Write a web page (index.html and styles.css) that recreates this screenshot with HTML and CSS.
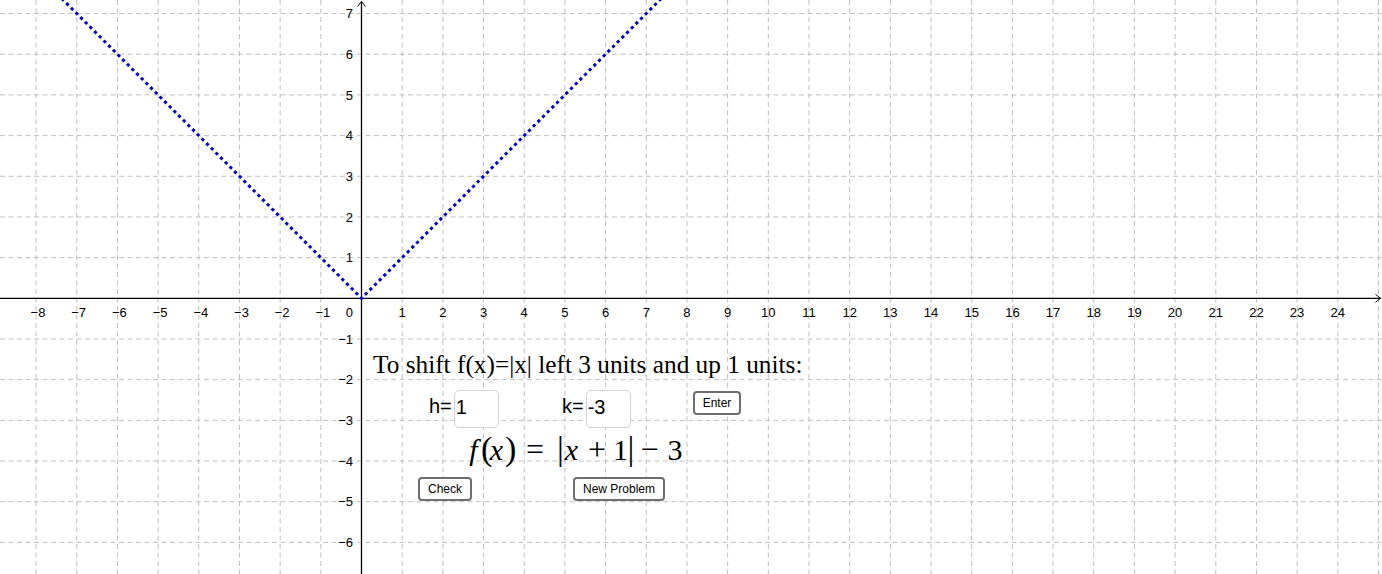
FILE: index.html
```html
<!DOCTYPE html>
<html lang="en">
<head>
<meta charset="utf-8">
<title>Shift f(x)=|x|</title>
<link rel="stylesheet" href="styles.css">
</head>
<body>
<div class="applet">
  <svg class="graph" width="1382" height="574" viewBox="0 0 1382 574" xmlns="http://www.w3.org/2000/svg">
    <path class="grid" d="M-4.62 0V574M36.06 0V574M76.74 0V574M117.42 0V574M158.1 0V574M198.78 0V574M239.46 0V574M280.14 0V574M320.82 0V574M402.18 0V574M442.86 0V574M483.54 0V574M524.22 0V574M564.9 0V574M605.58 0V574M646.26 0V574M686.94 0V574M727.62 0V574M768.3 0V574M808.98 0V574M849.66 0V574M890.34 0V574M931.02 0V574M971.7 0V574M1012.38 0V574M1053.06 0V574M1093.74 0V574M1134.42 0V574M1175.1 0V574M1215.78 0V574M1256.46 0V574M1297.14 0V574M1337.82 0V574M1378.5 0V574"/>
    <path class="grid" d="M0 13.54H1382M0 54.22H1382M0 94.9H1382M0 135.58H1382M0 176.26H1382M0 216.94H1382M0 257.62H1382M0 338.98H1382M0 379.66H1382M0 420.34H1382M0 461.02H1382M0 501.7H1382M0 542.38H1382"/>
    <path class="axis" d="M0 298.3H1380.5M361.5 574V1.5"/>
    <path class="arrow" d="M357.5 6.5L361.5 1.5L365.5 6.5M1375.5 294.3L1380.5 298.3L1375.5 302.3"/>
    <polyline class="curve" points="52.3,-10.9 361.5,298.3 670.7,-10.9"/>
    <g class="xlabels">
      <text x="38" y="317">−8</text>
      <text x="78.7" y="317">−7</text>
      <text x="119.4" y="317">−6</text>
      <text x="160.1" y="317">−5</text>
      <text x="200.8" y="317">−4</text>
      <text x="241.5" y="317">−3</text>
      <text x="282.1" y="317">−2</text>
      <text x="322.8" y="317">−1</text>
      <text x="402.2" y="317">1</text>
      <text x="442.9" y="317">2</text>
      <text x="483.5" y="317">3</text>
      <text x="524.2" y="317">4</text>
      <text x="564.9" y="317">5</text>
      <text x="605.6" y="317">6</text>
      <text x="646.3" y="317">7</text>
      <text x="686.9" y="317">8</text>
      <text x="727.6" y="317">9</text>
      <text x="768.3" y="317">10</text>
      <text x="809" y="317">11</text>
      <text x="849.7" y="317">12</text>
      <text x="890.3" y="317">13</text>
      <text x="931" y="317">14</text>
      <text x="971.7" y="317">15</text>
      <text x="1012.4" y="317">16</text>
      <text x="1053.1" y="317">17</text>
      <text x="1093.7" y="317">18</text>
      <text x="1134.4" y="317">19</text>
      <text x="1175.1" y="317">20</text>
      <text x="1215.8" y="317">21</text>
      <text x="1256.5" y="317">22</text>
      <text x="1297.1" y="317">23</text>
      <text x="1337.8" y="317">24</text>
    </g>
    <g class="ylabels">
      <text x="353" y="317">0</text>
      <text x="353" y="18.2">7</text>
      <text x="353" y="58.9">6</text>
      <text x="353" y="99.6">5</text>
      <text x="353" y="140.3">4</text>
      <text x="353" y="181">3</text>
      <text x="353" y="221.6">2</text>
      <text x="353" y="262.3">1</text>
      <text x="353" y="343.7">−1</text>
      <text x="353" y="384.4">−2</text>
      <text x="353" y="425">−3</text>
      <text x="353" y="465.7">−4</text>
      <text x="353" y="506.4">−5</text>
      <text x="353" y="547.1">−6</text>
    </g>
  </svg>

  <div class="prompt">To shift f(x)=|x| left 3 units and up 1 units:</div>

  <div class="field field-h"><span class="field-label">h=</span><span class="field-box">1</span></div>
  <div class="field field-k"><span class="field-label">k=</span><span class="field-box">-3</span></div>

  <button class="btn btn-enter" type="button">Enter</button>

  <div class="formula">
    <span class="m mi w15">f</span><span class="m fence w7">(</span><span class="m mi w17">x</span><span class="m fence w8">)</span><span class="m op w44">=</span><span class="m fence bar w5">|</span><span class="m mi w19">x</span><span class="m op w32">+</span><span class="m w14">1</span><span class="m fence bar w8">|</span><span class="m op w29">−</span><span class="m w22">3</span>
  </div>

  <button class="btn btn-check" type="button">Check</button>
  <button class="btn btn-new" type="button">New Problem</button>
</div>
</body>
</html>
```

FILE: styles.css
```css
html, body {
  margin: 0;
  padding: 0;
  background: #ffffff;
}

.applet {
  position: relative;
  width: 1382px;
  height: 574px;
  overflow: hidden;
  background: #ffffff;
  font-family: "Liberation Sans", Arial, sans-serif;
}

.graph {
  display: block;
}

.grid {
  fill: none;
  stroke: #c0c0c0;
  stroke-width: 1;
  stroke-dasharray: 5 3.5;
}

.axis {
  fill: none;
  stroke: #000000;
  stroke-width: 1.3;
}

.arrow {
  fill: none;
  stroke: #000000;
  stroke-width: 1;
}

.curve {
  fill: none;
  stroke: #0000cc;
  stroke-width: 3;
  stroke-dasharray: 3.2 3.4;
}

.xlabels text,
.ylabels text {
  font-family: "Liberation Sans", Arial, sans-serif;
  font-size: 13px;
  fill: #000000;
}

.xlabels text {
  text-anchor: middle;
}

.ylabels text {
  text-anchor: end;
}

.prompt {
  position: absolute;
  left: 373px;
  top: 352px;
  font-family: "Liberation Serif", "Times New Roman", serif;
  font-size: 25.3px;
  line-height: 25px;
  white-space: nowrap;
  color: #000000;
}

.field {
  position: absolute;
  top: 390px;
  display: flex;
  align-items: flex-start;
}

.field-h {
  left: 429px;
}

.field-k {
  left: 562px;
}

.field-label {
  font-size: 20px;
  line-height: 33px;
  color: #000000;
  margin-right: 2px;
}

.field-box {
  box-sizing: border-box;
  width: 45px;
  height: 38px;
  border: 1px solid #d4d4d4;
  border-radius: 5px;
  padding-left: 1px;
  font-size: 20px;
  line-height: 33px;
  color: #000000;
  background: #ffffff;
}

.btn {
  position: absolute;
  box-sizing: border-box;
  height: 24px;
  padding: 0;
  margin: 0;
  border: 2px solid #6e6e6e;
  border-radius: 4px;
  background: #ffffff;
  font-family: "Liberation Sans", Arial, sans-serif;
  font-size: 12px;
  line-height: 20px;
  color: #000000;
  text-align: center;
}

.btn-enter {
  left: 693px;
  top: 391px;
  width: 48px;
}

.btn-check {
  left: 418px;
  top: 477px;
  width: 54px;
}

.btn-new {
  left: 573px;
  top: 477px;
  width: 92px;
}

.formula {
  position: absolute;
  left: 466px;
  top: 431px;
  display: flex;
  align-items: baseline;
  font-family: "Liberation Serif", "Times New Roman", serif;
  white-space: nowrap;
  color: #000000;
}

.formula .m {
  display: block;
  text-align: center;
  font-size: 30px;
  line-height: 36px;
}

.formula .mi {
  font-style: italic;
}

.formula .op {
  font-size: 32px;
}

.formula .fence {
  font-size: 34px;
}

.formula .w5 { width: 5px; }
.formula .w7 { width: 7px; }
.formula .w8 { width: 8px; }
.formula .w14 { width: 14px; }
.formula .w15 { width: 15px; }
.formula .w17 { width: 17px; }
.formula .w19 { width: 19px; }
.formula .w22 { width: 22px; }
.formula .w29 { width: 29px; }
.formula .w32 { width: 32px; }
.formula .w44 { width: 44px; }
```
